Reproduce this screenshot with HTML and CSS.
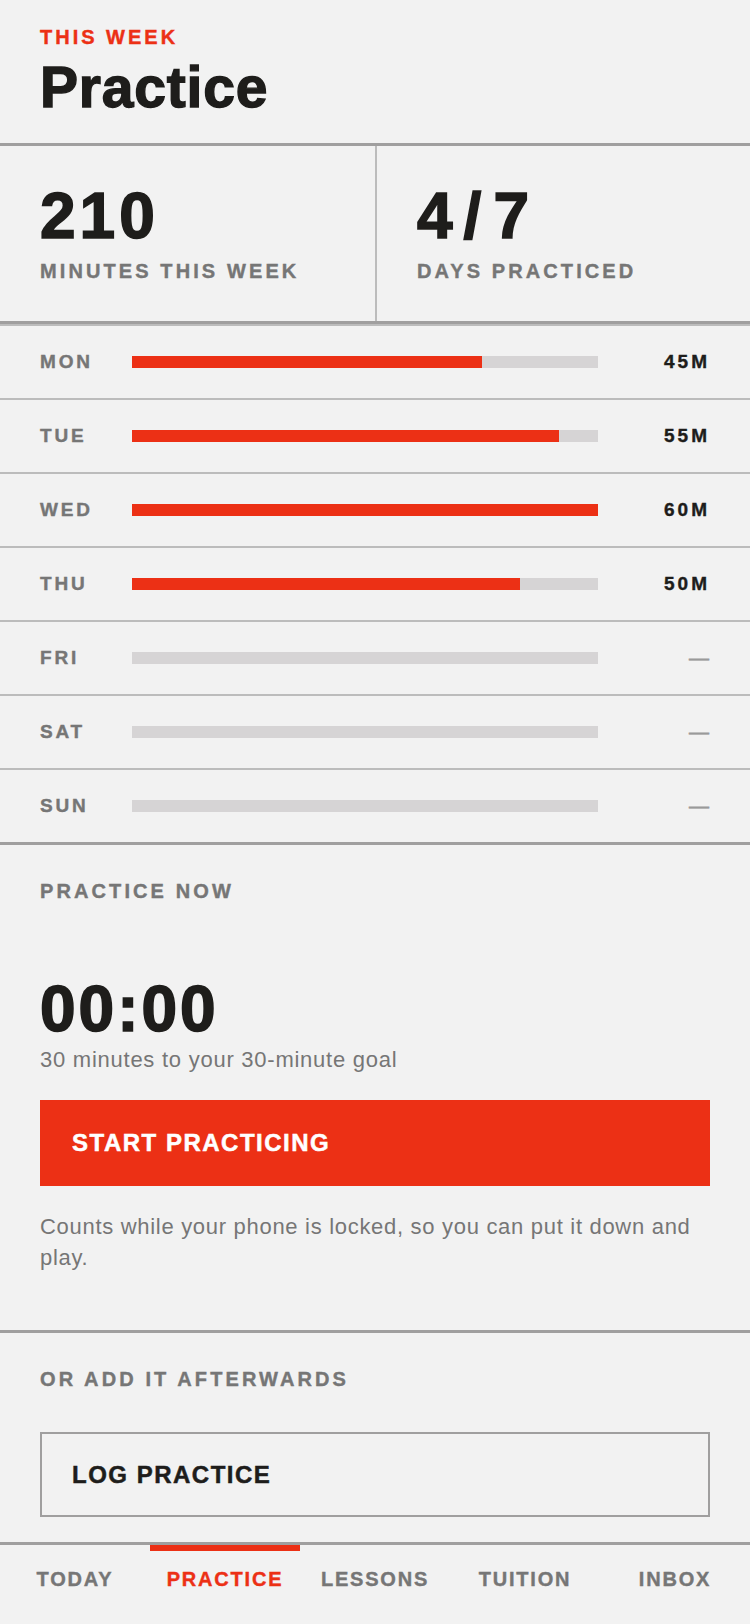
FILE: index.html
```html
<!DOCTYPE html>
<html lang="en">
<head>
  <meta charset="UTF-8">
  <meta name="viewport" content="width=device-width, initial-scale=1.0">
  <title>Practice</title>
  <link rel="stylesheet" href="styles.css">
</head>
<body>
  <header class="page-head">
    <div class="eyebrow">THIS WEEK</div>
    <h1 class="title">Practice</h1>
  </header>

  <section class="stats">
    <div class="stat">
      <div class="stat-num">210</div>
      <div class="label">MINUTES THIS WEEK</div>
    </div>
    <div class="stat stat-days">
      <div class="stat-num">4<span class="slash">/</span>7</div>
      <div class="label">DAYS PRACTICED</div>
    </div>
  </section>

  <section class="week">
    <div class="day">
      <span class="day-name">MON</span>
      <div class="track"><div class="fill" style="width: 75%"></div></div>
      <span class="day-value">45M</span>
    </div>
    <div class="day">
      <span class="day-name">TUE</span>
      <div class="track"><div class="fill" style="width: 91.67%"></div></div>
      <span class="day-value">55M</span>
    </div>
    <div class="day">
      <span class="day-name">WED</span>
      <div class="track"><div class="fill" style="width: 100%"></div></div>
      <span class="day-value">60M</span>
    </div>
    <div class="day">
      <span class="day-name">THU</span>
      <div class="track"><div class="fill" style="width: 83.33%"></div></div>
      <span class="day-value">50M</span>
    </div>
    <div class="day">
      <span class="day-name">FRI</span>
      <div class="track"></div>
      <span class="day-value empty">—</span>
    </div>
    <div class="day">
      <span class="day-name">SAT</span>
      <div class="track"></div>
      <span class="day-value empty">—</span>
    </div>
    <div class="day">
      <span class="day-name">SUN</span>
      <div class="track"></div>
      <span class="day-value empty">—</span>
    </div>
  </section>

  <section class="block practice-now">
    <div class="label">PRACTICE NOW</div>
    <div class="timer">00:00</div>
    <p class="goal">30 minutes to your 30-minute goal</p>
    <button class="btn btn-primary">START PRACTICING</button>
    <p class="hint">Counts while your phone is locked, so you can put it down and play.</p>
  </section>

  <section class="block add-later">
    <div class="label">OR ADD IT AFTERWARDS</div>
    <button class="btn btn-outline">LOG PRACTICE</button>
  </section>

  <nav class="tabbar">
    <a class="tab">TODAY</a>
    <a class="tab active">PRACTICE</a>
    <a class="tab">LESSONS</a>
    <a class="tab">TUITION</a>
    <a class="tab">INBOX</a>
  </nav>
</body>
</html>
```

FILE: styles.css
```css
* { box-sizing: border-box; }
body {
  margin: 0;
  font-family: 'Liberation Sans', Arial, sans-serif;
  background-color: #f2f2f2;
  color: #1e1d1b;
}
.page-head {
  padding: 25px 40px 27px;
  border-bottom: 3px solid #a09f9f;
}
.eyebrow {
  color: #ec3015;
  font-size: 20px;
  line-height: 24px;
  font-weight: bold;
  letter-spacing: 3px;
  -webkit-text-stroke: 0.4px currentColor;
}
.title {
  margin: 10px 0 0;
  font-size: 57px;
  line-height: 57px;
  font-weight: bold;
  letter-spacing: 0.8px;
  -webkit-text-stroke: 1.4px currentColor;
}
.label {
  color: #767676;
  font-size: 20px;
  line-height: 24px;
  font-weight: bold;
  letter-spacing: 3.1px;
  -webkit-text-stroke: 0.4px currentColor;
}
.stats {
  display: grid;
  grid-template-columns: 1fr 1fr;
  border-bottom: 3px solid #a09f9f;
}
.stat {
  padding: 38px 40px;
}
.stat-days {
  border-left: 2px solid #bcbcbc;
}
.stat-num {
  font-size: 64px;
  line-height: 64px;
  font-weight: bold;
  letter-spacing: 4px;
  -webkit-text-stroke: 1.6px currentColor;
}
.stat .label { margin-top: 11px; }
.slash {
  margin: 0 8px 0 7px;
}
.week {
  border-top: 2px solid #bcbcbc;
  border-bottom: 3px solid #a09f9f;
}
.day {
  display: grid;
  grid-template-columns: 92px 466px 1fr;
  align-items: center;
  box-sizing: content-box;
  height: 72px;
  padding: 0 40px;
}
.day + .day { border-top: 2px solid #bcbcbc; }
.day-name {
  color: #767676;
  font-size: 19px;
  font-weight: bold;
  letter-spacing: 2.8px;
  -webkit-text-stroke: 0.4px currentColor;
}
.track {
  height: 12px;
  background: #d6d4d5;
}
.fill {
  height: 100%;
  background: #ec3015;
}
.day-value {
  text-align: right;
  font-size: 19px;
  font-weight: bold;
  letter-spacing: 3px;
  -webkit-text-stroke: 0.4px currentColor;
}
.day-value.empty {
  color: #9a9a9a;
  font-size: 20px;
  font-weight: normal;
  letter-spacing: 0;
  margin-right: 1px;
  -webkit-text-stroke: 0.6px currentColor;
}
.block {
  padding: 34px 40px 57px;
  border-bottom: 3px solid #a09f9f;
}
.timer {
  margin-top: 74px;
  font-size: 64px;
  line-height: 64px;
  font-weight: bold;
  letter-spacing: 3px;
  -webkit-text-stroke: 1.6px currentColor;
}
.goal {
  margin: 5px 0 0;
  color: #767676;
  font-size: 22px;
  line-height: 28px;
  letter-spacing: 0.75px;
}
.btn {
  display: block;
  width: 100%;
  margin-top: 26px;
  padding: 0 0 0 32px;
  text-align: left;
  font-family: inherit;
  font-size: 24px;
  font-weight: bold;
  letter-spacing: 1.5px;
  -webkit-text-stroke: 0.5px currentColor;
  cursor: pointer;
}
.btn-primary {
  height: 86px;
  background: #ec3015;
  color: #ffffff;
  border: none;
}
.hint {
  margin: 25px 0 0;
  color: #767676;
  font-size: 22px;
  line-height: 31px;
  letter-spacing: 0.7px;
}
.add-later { padding-bottom: 25px; }
.btn-outline {
  height: 85px;
  margin-top: 41px;
  padding-left: 30px;
  background: transparent;
  color: #1e1d1b;
  border: 2px solid #a09f9f;
}
.tabbar {
  display: grid;
  grid-template-columns: repeat(5, 1fr);
}
.tab {
  border-top: 6px solid transparent;
  padding: 16px 0 33px;
  text-align: center;
  color: #767676;
  font-size: 20px;
  line-height: 24px;
  font-weight: bold;
  letter-spacing: 1.8px;
  -webkit-text-stroke: 0.4px currentColor;
}
.tab.active {
  color: #ec3015;
  border-top-color: #ec3015;
}
```
